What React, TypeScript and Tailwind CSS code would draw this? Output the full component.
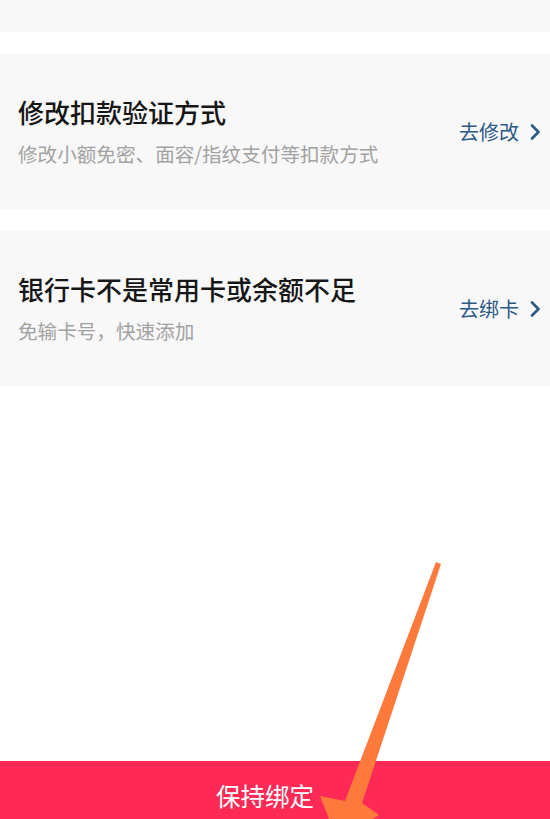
const font = { fontFamily: '"Noto Sans CJK SC", "Noto Sans", sans-serif' };

type Item = { title: string; desc: string; action: string };

const items: Item[] = [
  { title: "修改扣款验证方式", desc: "修改小额免密、面容/指纹支付等扣款方式", action: "去修改" },
  { title: "银行卡不是常用卡或余额不足", desc: "免输卡号，快速添加", action: "去绑卡" },
];

function Chevron() {
  return (
    <svg width="12" height="18" viewBox="0 0 12 18" fill="none" className="ml-[10px]">
      <path d="M3 2.5 L9.5 9 L3 15.5" stroke="#2b5a87" strokeWidth="2.6" strokeLinecap="round" strokeLinejoin="round" />
    </svg>
  );
}

export default function App() {
  return (
    <div className="relative flex min-h-[819px] w-[550px] flex-col overflow-hidden bg-white" style={font}>
      <div className="h-[32px] bg-[#f8f8f8]" />
      <div className="mt-[22px] flex flex-col gap-[22px]">
        {items.map((it) => (
          <div key={it.title} className="flex h-[155px] items-center bg-[#f8f8f8] pl-[18px] pr-[9px]">
            <div className="flex flex-1 flex-col pb-[2px]">
              <div className="text-[26px] font-medium leading-[34px] text-[#161616]">{it.title}</div>
              <div className="mt-[12px] text-[19.6px] leading-[26px] text-[#a2a2a2]">{it.desc}</div>
            </div>
            <div className="flex items-center">
              <span className="text-[20px] text-[#2b5a87]">{it.action}</span>
              <Chevron />
            </div>
          </div>
        ))}
      </div>
      <div className="mt-auto flex h-[58px] justify-center bg-[#fe2a55] pr-[20px] pt-[19px]">
        <span className="text-[24.5px] leading-[32px] text-white">保持绑定</span>
      </div>
      <svg className="pointer-events-none absolute left-0 top-0" width="550" height="819" viewBox="0 0 550 819">
        <polygon
          points="436,562 441,564 362,803 379,815 338,842 320,796 345,801"
          fill="#fd7a3c"
        />
      </svg>
    </div>
  );
}
